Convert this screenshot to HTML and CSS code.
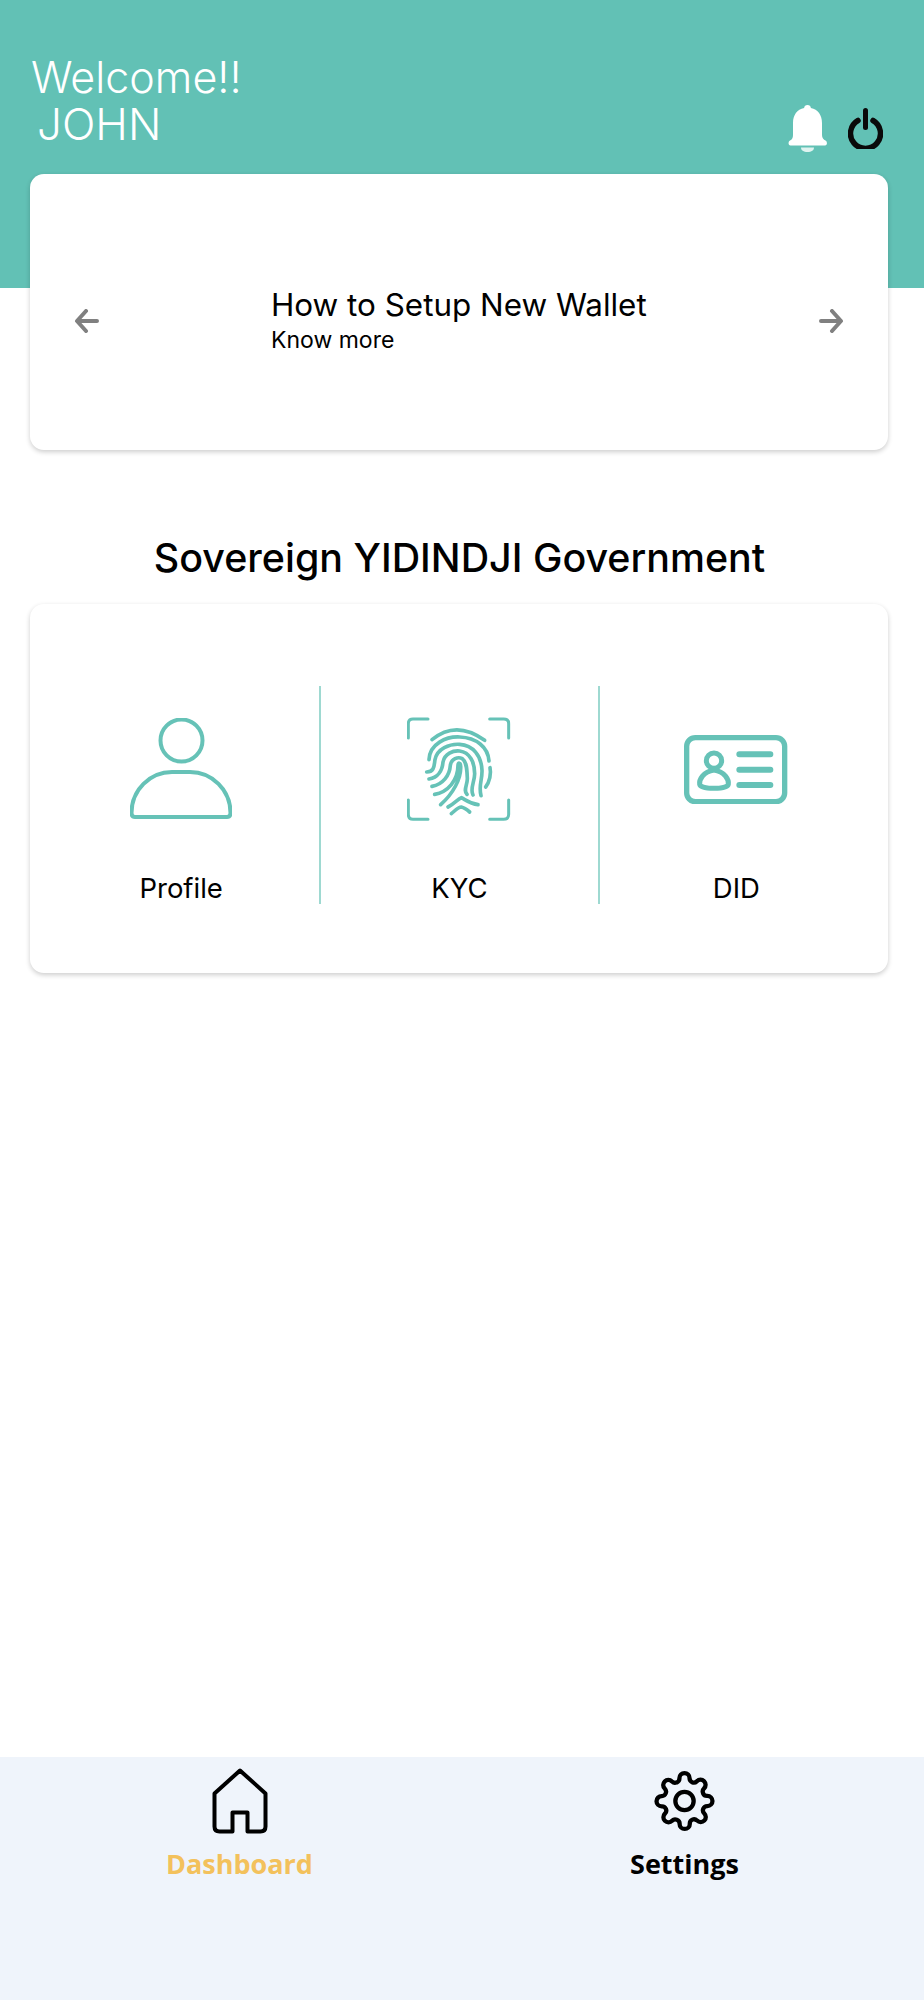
FILE: index.html
```html
<!DOCTYPE html>
<html lang="en">
<head>
    <meta charset="UTF-8">
    <meta name="viewport" content="width=device-width, initial-scale=1.0">
    <title>Dashboard</title>
    <link rel="stylesheet" href="styles.css">
</head>
<body>
    <div class="page-container">
        <div class="top-header">
            <div class="welcome-text">
                <div>Welcome!!</div>
                <div class="welcome-name">JOHN</div>
            </div>
            <div class="header-icons">
                <svg class="bell-icon" viewBox="0 0 39 47">
                    <path d="M19.500 0c2 0 3.200 1 3.400 3C30 4.500 34 10 34 18v12c0 3 1.500 4.500 3.500 5.500 2 1 2 5-.5 5H2.500c-2.500 0-2.500-4-.5-5 2-1 3-2.500 3-5.500V18C5 10 9 4.500 16.100 3c.2-2 1.400-3 3.400-3z" fill="#fff"/>
                    <path d="M13 42.500h13c0 2.800-2.500 4.500-6.500 4.500S13 45.300 13 42.500z" fill="#dff3f0"/>
                </svg>
                <svg class="power-icon" viewBox="0 0 35 41">
                    <path d="M10 12.500a15 15 0 1 0 15 0" fill="none" stroke="#0a0a0a" stroke-width="5.500" stroke-linecap="round"/>
                    <path d="M17.500 2.500v17" fill="none" stroke="#0a0a0a" stroke-width="5" stroke-linecap="round"/>
                </svg>
            </div>
        </div>

        <div class="card slide-card">
            <svg class="arrow-icon" viewBox="0 0 25 24">
                <path d="M23 12H4M12 2L3 12l9 10" fill="none" stroke="#808080" stroke-width="4" stroke-linecap="round" stroke-linejoin="round"/>
            </svg>
            <div class="slide-text">
                <div class="slide-title">How to Setup New Wallet</div>
                <div class="slide-link">Know more</div>
            </div>
            <svg class="arrow-icon" viewBox="0 0 25 24">
                <path d="M2 12h19M13 2l9 10-9 10" fill="none" stroke="#808080" stroke-width="4" stroke-linecap="round" stroke-linejoin="round"/>
            </svg>
        </div>

        <h2 class="section-title">Sovereign YIDINDJI Government</h2>

        <div class="card menu-card">
            <div class="menu-item">
                <div class="menu-icon">
                    <svg width="102" height="102" viewBox="130 718 102 102" fill="none" stroke="#66c2b7" stroke-width="4">
                        <circle cx="181.500" cy="740.500" r="21"/>
                        <path d="M135 817H227Q230.500 817 230.500 813C230.500 790 212 772 190 772H172C150 772 131.500 790 131.500 813Q131.500 817 135 817Z"/>
                    </svg>
                </div>
                <div class="menu-label">Profile</div>
            </div>
            <div class="menu-item">
                <div class="menu-icon">
                    <svg width="104" height="104" viewBox="82 80 312 312" fill="none" stroke="#66c2b7" stroke-linecap="round">
                        <g stroke-width="9">
                            <path d="M86 143V100Q86 86 100 86H145"/>
                            <path d="M330 86H372Q387 86 387 100V143"/>
                            <path d="M86 329V372Q86 387 100 387H145"/>
                            <path d="M387 329V372Q387 387 372 387H330"/>
                        </g>
                        <g stroke-width="11">
                            <path d="M157 148Q230 88 315 150"/>
                            <path d="M148 208C150 160 200 138 240 140C290 142 325 170 328 212"/>
                            <path d="M141 245C165 245 163 225 166 208C172 175 210 160 240 162C280 165 305 195 307 240C308 270 296 285 304 316"/>
                            <path d="M148 266C175 262 188 240 190 215C195 190 220 180 240 182C270 186 285 215 285 250C285 275 270 295 280 314"/>
                            <path d="M157 288C190 282 210 255 212 225C215 205 235 198 248 205C262 215 262 240 263 265C263 285 250 300 262 312"/>
                            <path d="M165 312C205 305 235 270 235 225C235 216 243 216 243 228C245 265 220 310 183 343"/>
                            <path d="M331 232C335 250 330 275 318 290"/>
                            <path d="M205 350C225 340 235 325 245 322C260 330 270 340 295 343"/>
                            <path d="M215 370C225 362 235 350 245 350C255 352 262 358 270 365"/>
                        </g>
                    </svg>
                </div>
                <div class="menu-label">KYC</div>
            </div>
            <div class="menu-item">
                <div class="menu-icon">
                    <svg width="104" height="69" viewBox="75 70 312 207" fill="none" stroke="#66c2b7">
                        <rect x="83" y="78" width="294" height="192" rx="26" stroke-width="16"/>
                        <circle cx="165" cy="147" r="23" stroke-width="15"/>
                        <path d="M165 175C132 180 120 205 122 218C125 234 205 234 208 218C210 205 198 180 165 175Z" stroke-width="15"/>
                        <path d="M241 128H334M241 174H334M241 220H334" stroke-width="18" stroke-linecap="round"/>
                    </svg>
                </div>
                <div class="menu-label">DID</div>
            </div>
        </div>

        <div class="bottom-nav">
            <div class="nav-item nav-active">
                <svg width="56" height="66" viewBox="211.500 1768.500 56 66" fill="none" stroke="#000" stroke-width="4" stroke-linejoin="round">
                    <path d="M239.500 1771L214 1794V1827Q214 1832 219 1832H232V1813H247V1832H260Q265 1832 265 1827V1794Z"/>
                </svg>
                <span>Dashboard</span>
            </div>
            <div class="nav-item">
                <svg width="61" height="61" viewBox="0 0 24 24" fill="none" stroke="#000" stroke-width="1.700" stroke-linecap="round" stroke-linejoin="round">
                    <circle cx="12" cy="12" r="3.600"/>
                    <path d="M19.400 15a1.650 1.650 0 0 0 .33 1.820l.06.06a2 2 0 0 1 0 2.830 2 2 0 0 1-2.830 0l-.06-.06a1.650 1.650 0 0 0-1.820-.33 1.650 1.650 0 0 0-1 1.510V21a2 2 0 0 1-2 2 2 2 0 0 1-2-2v-.09A1.650 1.650 0 0 0 9 19.400a1.650 1.650 0 0 0-1.820.33l-.06.06a2 2 0 0 1-2.830 0 2 2 0 0 1 0-2.830l.06-.06a1.650 1.650 0 0 0 .33-1.820 1.650 1.650 0 0 0-1.510-1H3a2 2 0 0 1-2-2 2 2 0 0 1 2-2h.09A1.650 1.650 0 0 0 4.600 9a1.650 1.650 0 0 0-.33-1.820l-.06-.06a2 2 0 0 1 0-2.830 2 2 0 0 1 2.830 0l.06.06a1.650 1.650 0 0 0 1.820.33H9a1.650 1.650 0 0 0 1-1.510V3a2 2 0 0 1 2-2 2 2 0 0 1 2 2v.09a1.650 1.650 0 0 0 1 1.510 1.650 1.650 0 0 0 1.820-.33l.06-.06a2 2 0 0 1 2.830 0 2 2 0 0 1 0 2.830l-.06.06a1.650 1.650 0 0 0-.33 1.820V9a1.650 1.650 0 0 0 1.510 1H21a2 2 0 0 1 2 2 2 2 0 0 1-2 2h-.09a1.650 1.650 0 0 0-1.510 1z"/>
                </svg>
                <span>Settings</span>
            </div>
        </div>
    </div>
</body>
</html>
```

FILE: styles.css
```css
body {
    font-family: Inter, "Liberation Sans", sans-serif;
    background-color: #fff;
    color: #000;
    margin: 0;
}
.page-container {
    display: flex;
    flex-direction: column;
    min-height: 2000px;
}
.top-header {
    background-color: #62c1b5;
    height: 288px;
    box-sizing: border-box;
    padding: 54px 41px 0 31px;
    display: flex;
    justify-content: space-between;
    align-items: flex-start;
}
.welcome-text {
    color: #fff;
    font-size: 43px;
    font-weight: 300;
    line-height: 47px;
}
.welcome-name {
    padding-left: 6px;
    font-size: 44px;
}
.header-icons {
    display: flex;
    align-items: flex-start;
    gap: 21px;
    margin-top: 51px;
}
.bell-icon {
    width: 39px;
    height: 47px;
}
.power-icon {
    width: 35px;
    height: 41px;
    margin-top: 3px;
}
.card {
    background-color: #fff;
    border-radius: 14px;
    margin: 0 36px 0 30px;
    box-shadow: 0 2px 5px rgba(0, 0, 0, 0.2);
}
.slide-card {
    margin-top: -114px;
    height: 276px;
    display: flex;
    align-items: center;
    padding: 0 44px;
    position: relative;
}
.arrow-icon {
    width: 25px;
    height: 24px;
    flex: none;
    margin-top: 18px;
}
.slide-text {
    flex: 1;
    padding-left: 172px;
    margin-top: 18px;
}
.slide-title {
    font-size: 31.400px;
    line-height: 38px;
}
.slide-link {
    font-size: 23px;
    line-height: 32px;
}
.section-title {
    font-size: 39.400px;
    font-weight: 500;
    line-height: 46px;
    text-align: center;
    margin: 85px 0 23px;
    padding-right: 5px;
}
.menu-card {
    height: 369px;
    box-sizing: border-box;
    padding: 82px 10px 69px 13px;
    display: grid;
    grid-template-columns: repeat(3, 1fr);
}
.menu-item {
    display: flex;
    flex-direction: column;
    align-items: center;
    padding-top: 32px;
    border-right: 2px solid #9ed9d1;
}
.menu-item:last-child {
    border-right: none;
    padding-right: 5px;
}
.menu-icon {
    height: 102px;
    display: flex;
    align-items: center;
    justify-content: center;
}
.menu-label {
    font-size: 27.500px;
    line-height: 32px;
    margin-top: 52px;
}
.bottom-nav {
    margin-top: auto;
    height: 243px;
    box-sizing: border-box;
    background-color: #eff4fb;
    padding: 11px 17px 0;
    display: grid;
    grid-template-columns: 1fr 1fr;
}
.nav-item {
    display: flex;
    flex-direction: column;
    align-items: center;
    font-family: "Open Sans", sans-serif;
    font-weight: 700;
    font-size: 27px;
    line-height: 36px;
}
.nav-item svg {
    height: 66px;
    margin-bottom: 12px;
}
.nav-active {
    color: #f3c15c;
}
```
